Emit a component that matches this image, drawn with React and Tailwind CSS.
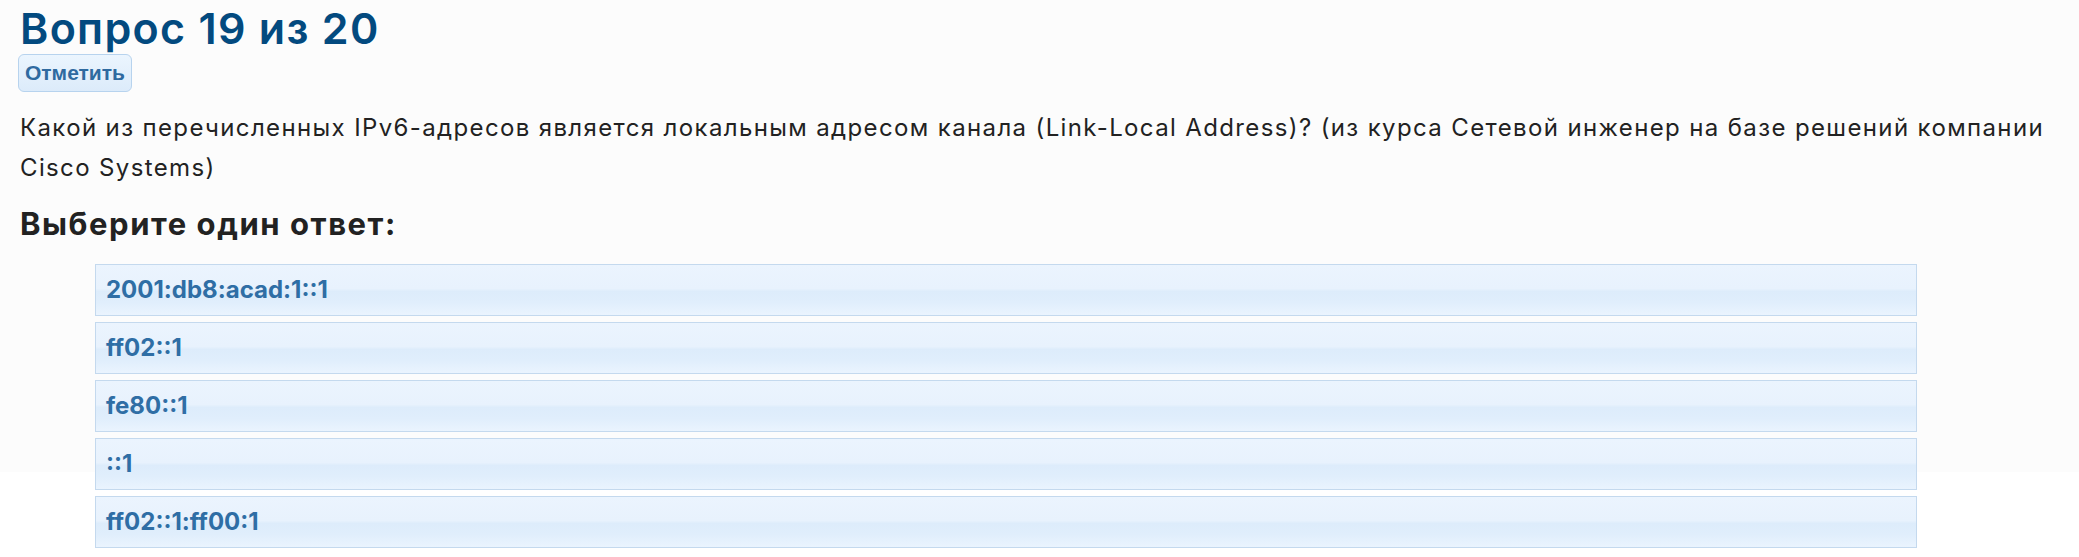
import React from 'react';

const answers = ['2001:db8:acad:1::1', 'ff02::1', 'fe80::1', '::1', 'ff02::1:ff00:1'];

const QuizQuestion = () => {
  return (
    <div className="min-h-screen bg-[linear-gradient(to_bottom,#fcfcfc_472px,#ffffff_472px)] pl-5 pr-6 pt-0 font-['Inter',sans-serif]">
      {/* Заголовок вопроса */}
      <h1 className="text-[43px] font-semibold leading-[56px] tracking-[0.03em] text-[#034a7f]">Вопрос 19 из 20</h1>

      <button
        type="button"
        className="mt-[-2px] h-[38px] rounded-md border border-[#b7d3ee] bg-[linear-gradient(to_bottom,#ebf5fe,#dcebfa)] px-[6px] font-['Liberation_Sans',Arial,sans-serif] text-[21px] font-bold text-[#2f6aa0] -ml-[2px]"
      >
        Отметить
      </button>

      {/* Текст вопроса */}
      <p className="mt-[16px] text-[24px] leading-[40px] tracking-[0.057em] text-[#222222]">
        Какой из перечисленных IPv6-адресов является локальным адресом канала (Link-Local Address)? (из курса Сетевой инженер на базе решений компании Cisco Systems)
      </p>

      <h2 className="mt-[14px] text-[31px] font-bold leading-[44px] tracking-[0.05em] text-[#222222]">Выберите один ответ:</h2>

      {/* Варианты ответа */}
      <div className="ml-[75px] mt-[18px] flex w-[1822px] flex-col gap-[6px]">
        {answers.map((answer) => (
          <div
            key={answer}
            className="flex h-[52px] items-center border border-[#c4d9ee] bg-[linear-gradient(to_bottom,#ebf4fe_0%,#e8f2fd_47%,#ddecfb_53%,#e0eefc_75%,#eaf4fe_100%)] px-[10px] text-[24px] font-bold text-[#2f6ea5]"
          >
            {answer}
          </div>
        ))}
      </div>
    </div>
  );
};

export default function App() {
  return <QuizQuestion />;
}
